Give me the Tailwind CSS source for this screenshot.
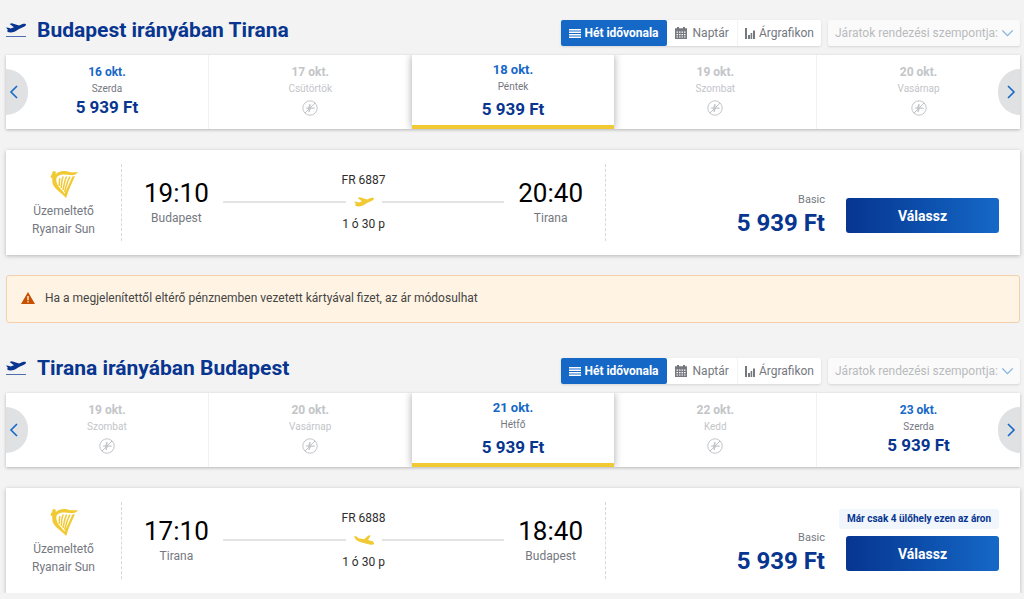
<!DOCTYPE html>
<html lang="hu">
<head>
  <meta charset="UTF-8" />
  <meta name="viewport" content="width=device-width, initial-scale=1.0"/>
  <title>Budapest – Tirana járatok</title>
  <script src="https://cdn.jsdelivr.net/npm/@tailwindcss/browser@4"></script>
</head>
<body class="bg-[#f3f3f3] pl-1.5 pr-1 font-['Roboto','Noto_Sans',sans-serif] text-[#75787f]">

  <!-- Shared icons -->
  <svg class="hidden" xmlns="http://www.w3.org/2000/svg">
    <symbol id="plane" viewBox="0 0 20 10">
      <path d="M0 4.600 2.400 4.700 4.600 5.400 8 4.200 3.600 1.100 5.800.3 13 2.600 16 1.200C18 .4 20 .6 20 1.600 20 2.800 18.800 3.400 17.400 4L13 6 9 8.500C6 9.800 2.800 9.800 1.600 8.800.8 8 1.600 7.400 1.800 6.800z"/>
    </symbol>
    <symbol id="plane-down" viewBox="0 0 20 10">
      <path d="M0 1.200 2.200 1.300 4.600 3.300 10 4.200 14.400.4 16.800.6 14 5 17.600 6C19.400 6.600 20.300 7.600 20 8.700 19.600 9.900 17.400 9.800 15.800 9.500L10.600 8.300 6 6.900C3 5.800 1.200 4.400 0 1.200z"/>
    </symbol>
    <symbol id="takeoff" viewBox="0 0 20 14">
      <use href="#plane" width="20" height="10"/>
      <path d="M0 13h20v1H0z" opacity=".7"/>
    </symbol>
    <symbol id="no-flight" viewBox="0 0 16 16">
      <circle cx="8" cy="8" r="7.2" fill="none" stroke="currentColor"/>
      <path d="M3 13 13 3" stroke="currentColor"/>
      <path d="M4 7.4h2.2L7.4 4h1.2l-.2 3.4H12c1 0 1 1.4 0 1.4H8.8L7.6 12H6.4l.2-3.2H4.4z"/>
    </symbol>
    <symbol id="rows" viewBox="0 0 12 9">
      <path d="M0 0h12v1.600H0zM0 2.500h12v1.600H0zM0 5h12v1.600H0zM0 7.400h12V9H0z"/>
    </symbol>
    <symbol id="calendar" viewBox="0 0 12 12">
      <path fill-rule="evenodd" d="M2 0h2v1.200h4V0h2v1.200H12V12H0V1.200h2zM1.500 4.500v1.200h1.500V4.500zm2.500 0v1.200h1.500V4.500zm2.500 0v1.200H8V4.500zm2.500 0v1.200h1.500V4.500zM1.500 7v1.200h1.500V7zm2.500 0v1.200h1.500V7zm2.500 0v1.200H8V7zm2.500 0v1.200h1.500V7zM1.500 9.500v1h1.500v-1zm2.500 0v1h1.500v-1zm2.500 0v1H8v-1zm2.500 0v1h1.500v-1z"/>
    </symbol>
    <symbol id="bars" viewBox="0 0 10 11">
      <path d="M0 0h2v11H0zM3 7h2v4H3zM5.600 5h1.600v6H5.600zM8 2.500h2V11H8z"/>
    </symbol>
    <symbol id="chevron" viewBox="0 0 10 16">
      <path d="M2 2l6 6-6 6" fill="none" stroke="currentColor" stroke-width="1.6"/>
    </symbol>
    <symbol id="harp" viewBox="0 0 28 28">
      <path d="M.5 6.5C1.2 5 2.2 4.600 2.200 3.200 2.200 1.200 4.200.4 5.400 1.600 6.200 2.400 5.800 3.600 5.600 4.200 9 1 13 .4 17.500 1.400 21 2.200 24.500 2.600 28 2 27 4.200 24 5.600 20 5 15 4.300 10 4 7 7 5.600 9 6.400 13.400 9 17 11 19.600 13.400 21.800 14.600 23.600 16.800 18.400 20 12 22.400 6.400L25 6.200C21.600 13.600 18.200 20.400 16.200 28 12.400 24.200 7 20.800 4 16.600 2 13.600 2.200 10.600 2.400 8.600 1.800 8.200.8 7.600.5 6.500z"/>
      <path d="M10 8C9 10.500 9.600 13 9.200 15.800M13.200 6.500C11.400 10 11.800 14 11.200 18M16.600 6.500C14.400 11 14 15 13 20M20 6.700C17.500 11 16 16 14.600 22" fill="none" stroke="currentColor" stroke-width="1.500"/>
    </symbol>
    <symbol id="warning" viewBox="0 0 14 12">
      <path fill-rule="evenodd" d="M7 0 14 12H0zM6.300 4v4.200h1.400V4zm0 5.200v1.400h1.400V9.200z"/>
    </symbol>
  </svg>

  <!-- Outbound -->
  <section>
    <header class="flex items-start justify-between pb-[9px] pt-5">
      <div class="-mt-1.5 flex items-center gap-[11px] text-[#073590]">
        <svg class="h-3.5 w-5 fill-current"><use href="#takeoff"/></svg>
        <h2 class="text-[21px] font-bold leading-8">Budapest irányában Tirana</h2>
      </div>
      <div class="flex h-[26px] text-xs">
        <div class="flex rounded-xs bg-white shadow-sm">
          <button class="flex items-center gap-[3px] rounded-xs bg-[#1668c7] px-2 font-bold text-white"><svg class="h-[9px] w-3 fill-current"><use href="#rows"/></svg>Hét idővonala</button>
          <button class="flex items-center gap-1.5 px-2"><svg class="size-3 fill-current"><use href="#calendar"/></svg>Naptár</button>
          <button class="flex items-center gap-1 border-l border-[#f3f3f3] px-[7px]"><svg class="h-[11px] w-2.5 fill-current"><use href="#bars"/></svg>Árgrafikon</button>
        </div>
        <div class="relative ml-[7px] text-[#b9babd]">
          <select aria-label="Járatok rendezési szempontja" class="h-full w-48 appearance-none rounded-xs bg-[#fafafa] pl-[7px] shadow-sm">
            <option>Járatok rendezési szempontja:</option>
          </select>
          <svg class="pointer-events-none absolute right-2 top-1.5 h-3.5 w-[9px] rotate-90 text-[#86b2e4]"><use href="#chevron"/></svg>
        </div>
      </div>
    </header>

    <div class="relative shadow-[0_1px_3px_rgba(0,0,0,0.25)]">
      <div class="grid h-[74px] grid-cols-5 overflow-hidden bg-white">
        <button class="flex flex-col items-center border-r border-[#f1f1f1] pt-[9px]">
          <span class="text-xs font-bold text-[#1668c7] leading-4">16 okt.</span>
          <span class="text-[10px] leading-[17px]">Szerda</span>
          <span class="text-[17px] font-bold leading-5 text-[#073590]">5 939 Ft</span>
        </button>
        <button class="flex flex-col items-center pt-[9px] text-[#c3c5c9]">
          <span class="text-xs font-bold leading-4">17 okt.</span>
          <span class="text-[10px] leading-[17px]">Csütörtök</span>
          <svg class="mt-[3px] size-4 fill-current"><use href="#no-flight"/></svg>
        </button>
        <button class="relative z-10 flex flex-col items-center border-b-4 border-[#f1c933] bg-white pt-[7px] shadow-[0_0_8px_rgba(0,0,0,0.35)]">
          <span class="text-[13px] font-bold text-[#1668c7] leading-4">18 okt.</span>
          <span class="text-[10px] leading-[17px]">Péntek</span>
          <span class="mt-1 text-[17px] font-bold leading-5 text-[#073590]">5 939 Ft</span>
        </button>
        <button class="flex flex-col items-center border-r border-[#f1f1f1] pt-[9px] text-[#c3c5c9]">
          <span class="text-xs font-bold leading-4">19 okt.</span>
          <span class="text-[10px] leading-[17px]">Szombat</span>
          <svg class="mt-[3px] size-4 fill-current"><use href="#no-flight"/></svg>
        </button>
        <button class="flex flex-col items-center pt-[9px] text-[#c3c5c9]">
          <span class="text-xs font-bold leading-4">20 okt.</span>
          <span class="text-[10px] leading-[17px]">Vasárnap</span>
          <svg class="mt-[3px] size-4 fill-current"><use href="#no-flight"/></svg>
        </button>
      </div>
      <button aria-label="Előző" class="absolute left-0 top-3.5 flex h-[46px] w-[22px] items-center rounded-r-[23px] bg-[#dfe1e3] pl-[3px] text-[#1668c7]"><svg class="h-4 w-2.5 rotate-180"><use href="#chevron"/></svg></button>
      <button aria-label="Következő" class="absolute right-0 top-3.5 flex h-[46px] w-[22px] items-center justify-end rounded-l-[23px] bg-[#dfe1e3] pr-1 text-[#1668c7]"><svg class="h-4 w-2.5"><use href="#chevron"/></svg></button>
    </div>

    <article class="mt-[21px] flex h-[105px] bg-white py-3.5 shadow-[0_1px_4px_rgba(0,0,0,0.25)]">
      <div class="flex w-[116px] flex-col items-center border-r border-dashed border-[#d8d8d8] pt-1.5 text-xs leading-[18px]">
        <svg class="mb-1 size-7 fill-current text-[#f1c933]"><use href="#harp"/></svg>
        <span>Üzemeltető</span>
        <span>Ryanair Sun</span>
      </div>
      <div class="flex flex-1 items-center border-r border-dashed border-[#d8d8d8] px-[22px] pb-0.5">
        <div class="flex flex-col items-center">
          <span class="text-[26px] leading-8 text-black">19:10</span>
          <span class="text-xs leading-[18px]">Budapest</span>
        </div>
        <div class="mx-3.5 flex flex-1 flex-col items-center gap-2 text-xs leading-[18px] text-[#2e2e2e]">
          <span>FR 6887</span>
          <div class="flex w-full items-center gap-2">
            <span class="h-0.5 flex-1 bg-[#e3e3e3]"></span>
            <svg class="h-2.5 w-5 fill-[#f1c933]"><use href="#plane"/></svg>
            <span class="h-0.5 flex-1 bg-[#e3e3e3]"></span>
          </div>
          <span>1 ó 30 p</span>
        </div>
        <div class="flex flex-col items-center">
          <span class="text-[26px] leading-8 text-black">20:40</span>
          <span class="text-xs leading-[18px]">Tirana</span>
        </div>
      </div>
      <div class="flex w-[414px] items-end justify-end gap-[21px] pb-[3px] pr-[21px]">
        <div class="flex flex-col items-end">
          <span class="text-[11px] leading-4">Basic</span>
          <span class="text-2xl font-bold leading-[30px] text-[#073590]">5 939 Ft</span>
        </div>
        <button class="mb-[5px] h-[35px] w-[153px] rounded-[3px] bg-linear-to-r from-[#073590] to-[#1668c7] text-sm font-bold text-white">Válassz</button>
      </div>
    </article>
  </section>

  <div role="alert" class="mt-5 flex h-12 items-center gap-2.5 rounded-[3px] border border-[#f3cfab] bg-[#fff4e3] px-3.5 pb-0.5 text-xs text-[#454545]">
    <svg class="h-3 w-3.5 fill-[#c64f00]"><use href="#warning"/></svg>
    <p>Ha a megjelenítettől eltérő pénznemben vezetett kártyával fizet, az ár módosulhat</p>
  </div>

  <!-- Return -->
  <section class="mt-[15px]">
    <header class="flex items-start justify-between pb-[9px] pt-5">
      <div class="-mt-1.5 flex items-center gap-[11px] text-[#073590]">
        <svg class="h-3.5 w-5 fill-current"><use href="#takeoff"/></svg>
        <h2 class="text-[21px] font-bold leading-8">Tirana irányában Budapest</h2>
      </div>
      <div class="flex h-[26px] text-xs">
        <div class="flex rounded-xs bg-white shadow-sm">
          <button class="flex items-center gap-[3px] rounded-xs bg-[#1668c7] px-2 font-bold text-white"><svg class="h-[9px] w-3 fill-current"><use href="#rows"/></svg>Hét idővonala</button>
          <button class="flex items-center gap-1.5 px-2"><svg class="size-3 fill-current"><use href="#calendar"/></svg>Naptár</button>
          <button class="flex items-center gap-1 border-l border-[#f3f3f3] px-[7px]"><svg class="h-[11px] w-2.5 fill-current"><use href="#bars"/></svg>Árgrafikon</button>
        </div>
        <div class="relative ml-[7px] text-[#b9babd]">
          <select aria-label="Járatok rendezési szempontja" class="h-full w-48 appearance-none rounded-xs bg-[#fafafa] pl-[7px] shadow-sm">
            <option>Járatok rendezési szempontja:</option>
          </select>
          <svg class="pointer-events-none absolute right-2 top-1.5 h-3.5 w-[9px] rotate-90 text-[#86b2e4]"><use href="#chevron"/></svg>
        </div>
      </div>
    </header>

    <div class="relative shadow-[0_1px_3px_rgba(0,0,0,0.25)]">
      <div class="grid h-[74px] grid-cols-5 overflow-hidden bg-white">
        <button class="flex flex-col items-center border-r border-[#f1f1f1] pt-[9px] text-[#c3c5c9]">
          <span class="text-xs font-bold leading-4">19 okt.</span>
          <span class="text-[10px] leading-[17px]">Szombat</span>
          <svg class="mt-[3px] size-4 fill-current"><use href="#no-flight"/></svg>
        </button>
        <button class="flex flex-col items-center pt-[9px] text-[#c3c5c9]">
          <span class="text-xs font-bold leading-4">20 okt.</span>
          <span class="text-[10px] leading-[17px]">Vasárnap</span>
          <svg class="mt-[3px] size-4 fill-current"><use href="#no-flight"/></svg>
        </button>
        <button class="relative z-10 flex flex-col items-center border-b-4 border-[#f1c933] bg-white pt-[7px] shadow-[0_0_8px_rgba(0,0,0,0.35)]">
          <span class="text-[13px] font-bold text-[#1668c7] leading-4">21 okt.</span>
          <span class="text-[10px] leading-[17px]">Hétfő</span>
          <span class="mt-1 text-[17px] font-bold leading-5 text-[#073590]">5 939 Ft</span>
        </button>
        <button class="flex flex-col items-center border-r border-[#f1f1f1] pt-[9px] text-[#c3c5c9]">
          <span class="text-xs font-bold leading-4">22 okt.</span>
          <span class="text-[10px] leading-[17px]">Kedd</span>
          <svg class="mt-[3px] size-4 fill-current"><use href="#no-flight"/></svg>
        </button>
        <button class="flex flex-col items-center pt-[9px]">
          <span class="text-xs font-bold text-[#1668c7] leading-4">23 okt.</span>
          <span class="text-[10px] leading-[17px]">Szerda</span>
          <span class="text-[17px] font-bold leading-5 text-[#073590]">5 939 Ft</span>
        </button>
      </div>
      <button aria-label="Előző" class="absolute left-0 top-3.5 flex h-[46px] w-[22px] items-center rounded-r-[23px] bg-[#dfe1e3] pl-[3px] text-[#1668c7]"><svg class="h-4 w-2.5 rotate-180"><use href="#chevron"/></svg></button>
      <button aria-label="Következő" class="absolute right-0 top-3.5 flex h-[46px] w-[22px] items-center justify-end rounded-l-[23px] bg-[#dfe1e3] pr-1 text-[#1668c7]"><svg class="h-4 w-2.5"><use href="#chevron"/></svg></button>
    </div>

    <article class="mt-[21px] flex h-[105px] bg-white py-3.5 shadow-[0_1px_4px_rgba(0,0,0,0.25)]">
      <div class="flex w-[116px] flex-col items-center border-r border-dashed border-[#d8d8d8] pt-1.5 text-xs leading-[18px]">
        <svg class="mb-1 size-7 fill-current text-[#f1c933]"><use href="#harp"/></svg>
        <span>Üzemeltető</span>
        <span>Ryanair Sun</span>
      </div>
      <div class="flex flex-1 items-center border-r border-dashed border-[#d8d8d8] px-[22px] pb-0.5">
        <div class="flex flex-col items-center">
          <span class="text-[26px] leading-8 text-black">17:10</span>
          <span class="text-xs leading-[18px]">Tirana</span>
        </div>
        <div class="mx-3.5 flex flex-1 flex-col items-center gap-2 text-xs leading-[18px] text-[#2e2e2e]">
          <span>FR 6888</span>
          <div class="flex w-full items-center gap-2">
            <span class="h-0.5 flex-1 bg-[#e3e3e3]"></span>
            <svg class="h-2.5 w-5 fill-[#f1c933]"><use href="#plane-down"/></svg>
            <span class="h-0.5 flex-1 bg-[#e3e3e3]"></span>
          </div>
          <span>1 ó 30 p</span>
        </div>
        <div class="flex flex-col items-center">
          <span class="text-[26px] leading-8 text-black">18:40</span>
          <span class="text-xs leading-[18px]">Budapest</span>
        </div>
      </div>
      <div class="flex w-[414px] items-end justify-end gap-[21px] pb-[3px] pr-[21px]">
        <div class="flex flex-col items-end">
          <span class="text-[11px] leading-4">Basic</span>
          <span class="text-2xl font-bold leading-[30px] text-[#073590]">5 939 Ft</span>
        </div>
        <div class="relative mb-[5px]">
          <span class="absolute bottom-full right-0 mb-[7px] whitespace-nowrap rounded-[3px] bg-[#f1f6fc] px-2 text-[10px] font-bold leading-5 text-[#073590]">Már csak 4 ülőhely ezen az áron</span>
          <button class="h-[35px] w-[153px] rounded-[3px] bg-linear-to-r from-[#073590] to-[#1668c7] text-sm font-bold text-white">Válassz</button>
        </div>
      </div>
    </article>
  </section>
</body>
</html>
